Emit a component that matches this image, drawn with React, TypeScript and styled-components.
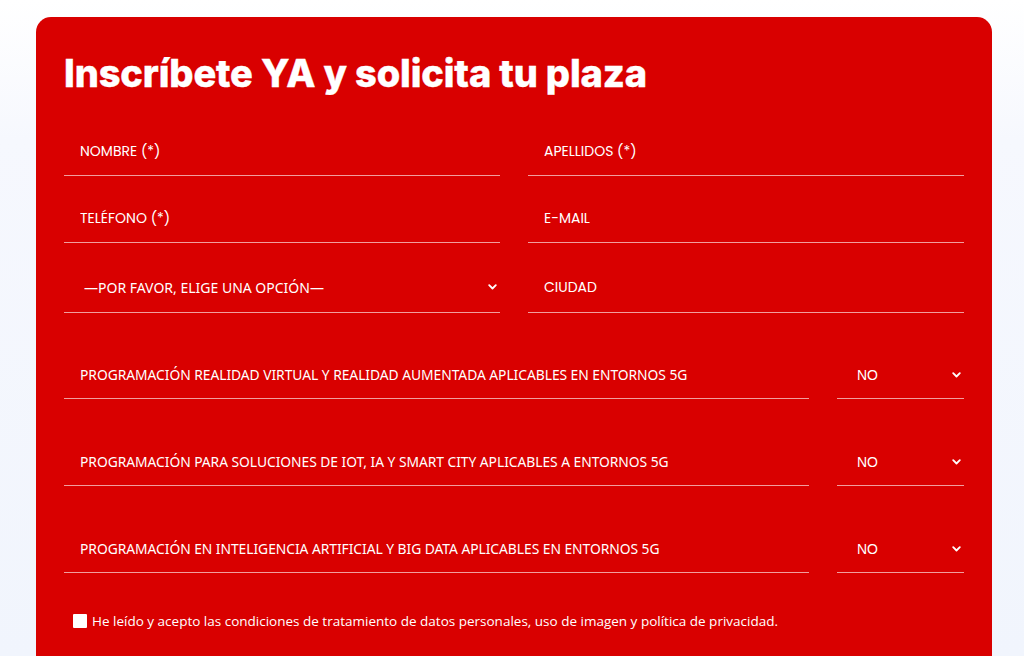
import { Fragment } from "react";
import styled, { createGlobalStyle } from "styled-components";

const GlobalStyle = createGlobalStyle`
  html, body {
    margin: 0;
    padding: 0;
  }
  body {
    font-family: "Open Sans", "Liberation Sans", sans-serif;
    background: linear-gradient(180deg, #ffffff 0px, #f6f8fe 140px, #f1f5fd 656px);
  }
`;

const Page = styled.div`
  min-height: 100vh;
  padding: 17px 32px 0 36px;
  box-sizing: border-box;
`;

const Card = styled.form`
  width: 956px;
  min-height: 660px;
  box-sizing: border-box;
  background: #d90000;
  border-radius: 15px 15px 0 0;
  padding: 30px 28px 0 28px;
  color: #fff;
`;

const Title = styled.h2`
  margin: 0 0 29px 0;
  font-family: "Inter", "Open Sans", sans-serif;
  font-weight: 800;
  font-size: 38px;
  line-height: 52px;
  letter-spacing: -0.15px;
  color: #fff;
  -webkit-text-stroke: 0.4px #fff;
`;

const Grid = styled.div<{ $cols: string; $gap: number }>`
  display: grid;
  grid-template-columns: ${(p) => p.$cols};
  column-gap: 28px;
  row-gap: ${(p) => p.$gap}px;
  margin-bottom: ${(p) => p.$gap}px;
`;

const Field = styled.label<{ $h?: number; $pl?: number; $pr?: number }>`
  display: flex;
  align-items: center;
  height: ${(p) => p.$h ?? 48}px;
  box-sizing: border-box;
  border-bottom: 1px solid rgba(255, 255, 255, 0.62);
  padding: 0 ${(p) => p.$pr ?? 16}px 0 ${(p) => p.$pl ?? 16}px;
`;

const TextInput = styled.input`
  flex: 1;
  min-width: 0;
  border: 0;
  outline: none;
  background: transparent;
  padding: 0;
  font-family: "Poppins", "Noto Sans", sans-serif;
  font-size: 14px;
  color: #fff;
  text-transform: uppercase;

  &::placeholder {
    color: #fff;
    opacity: 1;
  }
`;

const Select = styled.select<{ $font?: string }>`
  flex: 1;
  min-width: 0;
  appearance: none;
  border: 0;
  outline: none;
  background: transparent;
  padding: 0;
  font-family: ${(p) => p.$font ?? `"Noto Sans", sans-serif`};
  font-size: 14px;
  color: #fff;
`;

const Label = styled.span`
  flex: 1;
  font-family: "Noto Sans", sans-serif;
  font-size: 13.85px;
  letter-spacing: -0.05px;
  color: #fff;
  white-space: nowrap;
`;

const Chevron = () => (
  <svg width="9" height="6" viewBox="0 0 9 6" fill="none">
    <polyline points="1.2,1.2 4.5,4.5 7.8,1.2" stroke="#fff" strokeWidth="1.8" strokeLinecap="round" strokeLinejoin="round" />
  </svg>
);

const ConsentRow = styled.label`
  display: flex;
  align-items: center;
  gap: 5px;
  margin-top: 36px;
  padding-left: 9px;
  font-family: "Open Sans", "Liberation Sans", sans-serif;
  font-size: 13.5px;
  color: #fff;
`;

const Check = styled.input`
  appearance: none;
  margin: 0;
  width: 14px;
  height: 14px;
  background: #fff;
  border-radius: 1px;
`;

const courses = [
  "PROGRAMACIÓN REALIDAD VIRTUAL Y REALIDAD AUMENTADA APLICABLES EN ENTORNOS 5G",
  "PROGRAMACIÓN PARA SOLUCIONES DE IOT, IA Y SMART CITY APLICABLES A ENTORNOS 5G",
  "PROGRAMACIÓN EN INTELIGENCIA ARTIFICIAL Y BIG DATA APLICABLES EN ENTORNOS 5G",
];

export default function App() {
  return (
    <Page>
      <GlobalStyle />
      <Card onSubmit={(e) => e.preventDefault()}>
        <Title>Inscríbete YA y solicita tu plaza</Title>

        <Grid $cols="1fr 1fr" $gap={19}>
          <Field>
            <TextInput placeholder="Nombre (*)" />
          </Field>
          <Field>
            <TextInput placeholder="Apellidos (*)" />
          </Field>
          <Field>
            <TextInput placeholder="Teléfono (*)" />
          </Field>
          <Field>
            <TextInput placeholder="E-mail" />
          </Field>
          <Field $h={51} $pl={20} $pr={3}>
            <Select defaultValue="">
              <option value="">—POR FAVOR, ELIGE UNA OPCIÓN—</option>
            </Select>
            <Chevron />
          </Field>
          <Field $h={51}>
            <TextInput placeholder="Ciudad" />
          </Field>
        </Grid>

        <Grid $cols="745px 127px" $gap={39} style={{ marginTop: 38 }}>
          {courses.map((c) => (
            <Fragment key={c}>
              <Field>
                <Label>{c}</Label>
              </Field>
              <Field $pl={20} $pr={3}>
                <Select $font={`"Liberation Sans", Arial, sans-serif`} defaultValue="no">
                  <option value="no">NO</option>
                  <option value="si">SÍ</option>
                </Select>
                <Chevron />
              </Field>
            </Fragment>
          ))}
        </Grid>

        <ConsentRow>
          <Check type="checkbox" />
          He leído y acepto las condiciones de tratamiento de datos personales, uso de imagen y política de privacidad.
        </ConsentRow>
      </Card>
    </Page>
  );
}
